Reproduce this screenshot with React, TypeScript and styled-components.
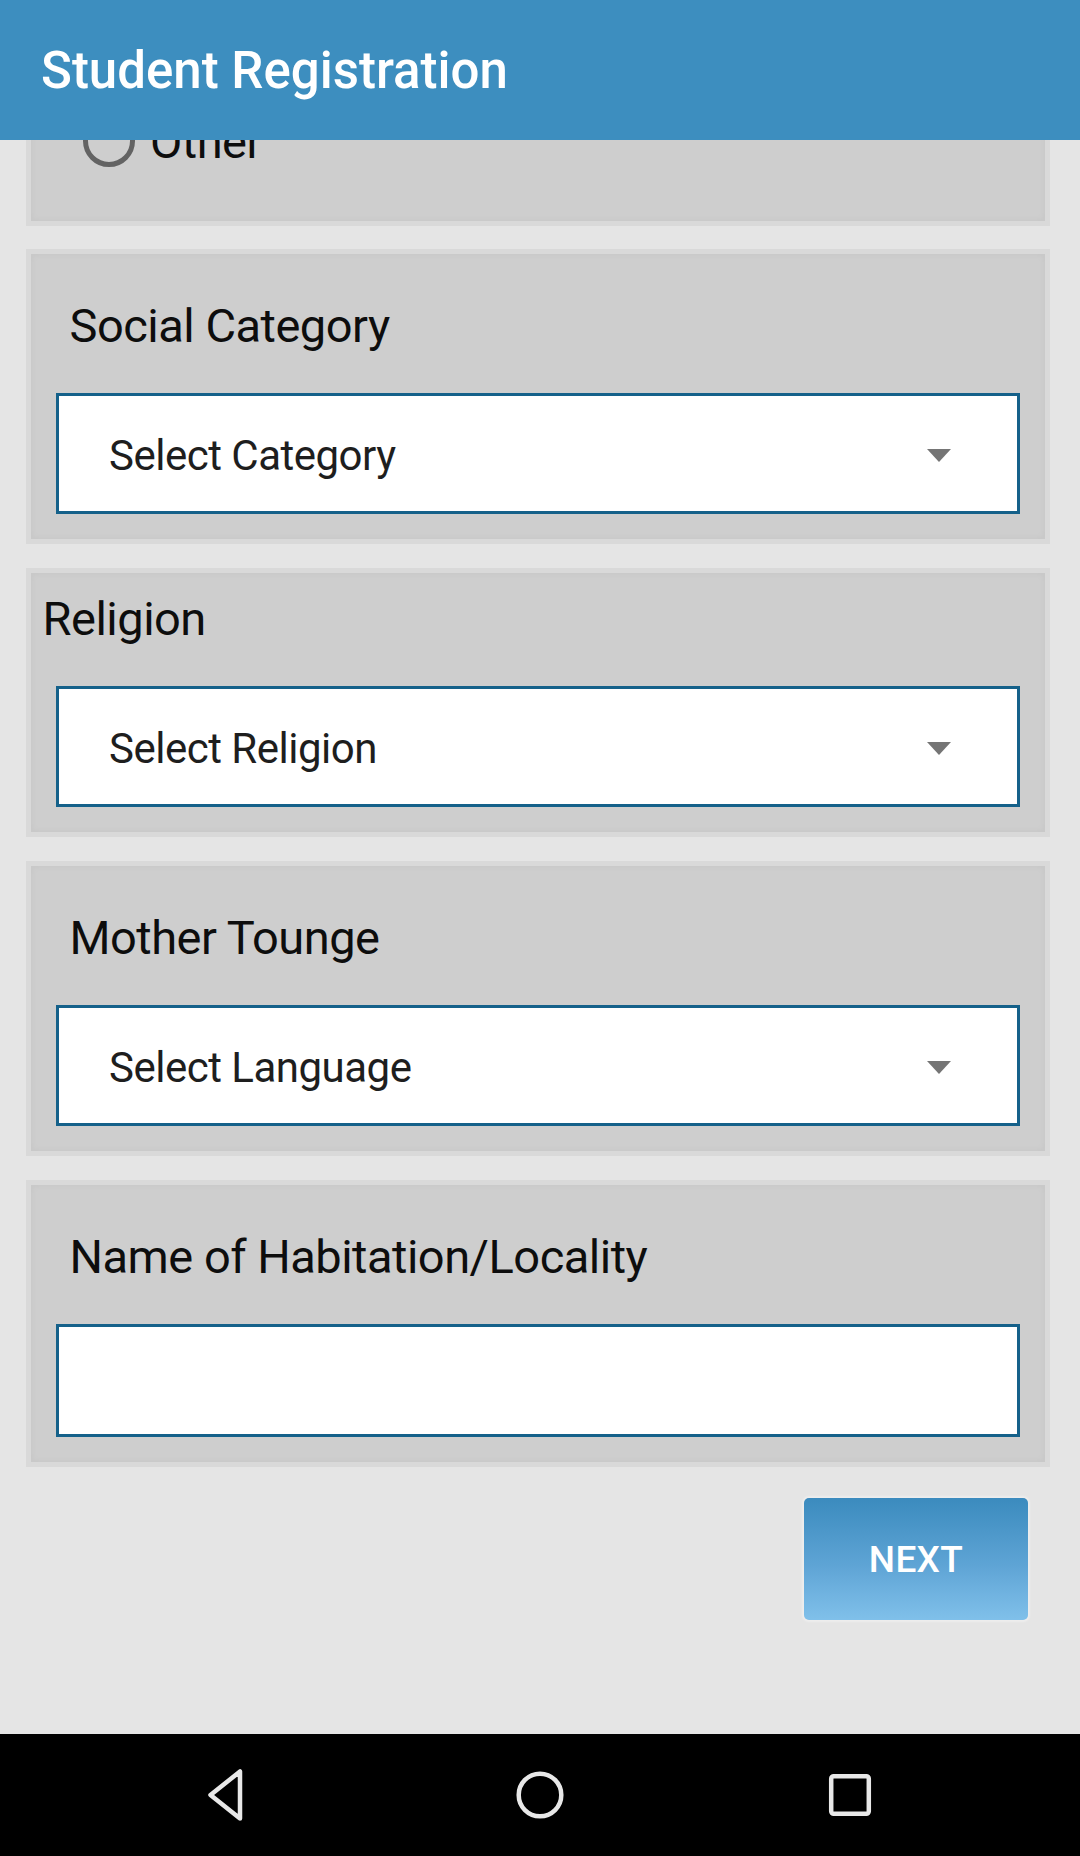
import styled, { createGlobalStyle } from "styled-components";

const GlobalStyle = createGlobalStyle`
    html, body {
        margin: 0;
        padding: 0;
        background: #e5e5e5;
    }
    body {
        font-family: Roboto, "Noto Sans", "Liberation Sans", sans-serif;
    }
    * {
        box-sizing: border-box;
    }
`;

const Screen = styled.div({
    width: 1080,
    height: 1856,
    display: 'flex',
    flexDirection: 'column',
    background: '#e5e5e5',
    overflow: 'hidden',
});

const AppBar = styled.header`
    height: 140px;
    flex-shrink: 0;
    display: flex;
    align-items: center;
    padding-left: 41px;
    background: #3d8ebf;
    position: relative;
    z-index: 1;
`;

const Title = styled.h1`
    margin: 0;
    font-size: 51px;
    font-weight: 500;
    color: #ffffff;
`;

const ScrollArea = styled.main`
    flex: 1;
    overflow: hidden;
    display: flex;
    flex-direction: column;
    gap: 24px;
    padding: 0 30px 0 26px;
`;

const Card = styled.section<{ $clipped?: boolean }>(({ $clipped }) => ({
    display: 'flex',
    flexDirection: 'column',
    background: '#cecece',
    border: '5px solid #d9d9d9',
    boxShadow: 'inset 0 0 6px 1px rgba(0, 0, 0, 0.035)',
    padding: '0 25px',
    marginTop: $clipped ? -61 : 0,
    marginBottom: $clipped ? -1 : 0,
    flexShrink: 0,
}));

const RadioRow = styled.label`
    display: flex;
    align-items: center;
    height: 56px;
    margin: 29px 0 52px 27px;
    gap: 15px;
    font-size: 47px;
    letter-spacing: -0.5px;
    color: #0d0d0d;
`;

const RadioCircle = styled.span`
    width: 52px;
    height: 52px;
    border-radius: 50%;
    border: 5px solid #636363;
    flex-shrink: 0;
`;

const FieldLabel = styled.div<{ $flush?: boolean }>(({ $flush }) => ({
    fontSize: 47,
    lineHeight: '55px',
    letterSpacing: -0.5,
    color: '#0d0d0d',
    marginTop: $flush ? 18 : 44,
    marginLeft: $flush ? -13.5 : 13.5,
    marginBottom: 40,
}));

const SelectBox = styled.div`
    height: 121px;
    display: flex;
    align-items: center;
    justify-content: space-between;
    background: #ffffff;
    border: 3px solid #15618a;
    padding: 4px 66px 0 50px;
    margin-bottom: 25px;
    font-size: 42px;
    letter-spacing: -0.5px;
    color: #1e1e1e;
`;

const Caret = styled.span`
    width: 0;
    height: 0;
    border-left: 12px solid transparent;
    border-right: 12px solid transparent;
    border-top: 13px solid #757575;
`;

const TextInput = styled.input`
    height: 113px;
    width: 100%;
    background: #ffffff;
    border: 3px solid #15618a;
    margin: 0 0 25px;
    padding: 0 49px;
    font-family: inherit;
    font-size: 42px;
    outline: none;
`;

const ButtonRow = styled.div`
    display: flex;
    justify-content: flex-end;
    padding: 7px 22px 0 0;
    flex-shrink: 0;
`;

const NextButton = styled.button`
    width: 224px;
    height: 122px;
    border: none;
    border-radius: 5px;
    background: linear-gradient(to bottom, #3b8bbe 0%, #5ea4d5 55%, #80c0ea 100%);
    box-shadow: 0 0 2px 2px rgba(255, 255, 255, 0.35);
    color: #ffffff;
    font-family: inherit;
    font-size: 37px;
    font-weight: 500;
    letter-spacing: 0.3px;
`;

const NavBar = styled.nav`
    height: 122px;
    flex-shrink: 0;
    background: #000000;
    display: flex;
    align-items: center;
    justify-content: center;
    gap: 250px;
`;

const NavIcon = styled.svg`
    width: 60px;
    height: 60px;
    display: block;
`;

type DropdownFieldProps = {
    label: string;
    placeholder: string;
    flush?: boolean;
};

const DropdownField = ({ label, placeholder, flush }: DropdownFieldProps) => (
    <Card>
        <FieldLabel $flush={flush}>{label}</FieldLabel>
        <SelectBox>
            <span>{placeholder}</span>
            <Caret />
        </SelectBox>
    </Card>
);

const App = () => {
    return <>
        <GlobalStyle />
        <Screen>
            <AppBar>
                <Title>Student Registration</Title>
            </AppBar>
            <ScrollArea>
                <Card $clipped>
                    <RadioRow>
                        <RadioCircle />
                        Other
                    </RadioRow>
                </Card>
                <DropdownField label="Social Category" placeholder="Select Category" />
                <DropdownField label="Religion" placeholder="Select Religion" flush />
                <DropdownField label="Mother Tounge" placeholder="Select Language" />
                <Card>
                    <FieldLabel>Name of Habitation/Locality</FieldLabel>
                    <TextInput type="text" />
                </Card>
                <ButtonRow>
                    <NextButton>NEXT</NextButton>
                </ButtonRow>
            </ScrollArea>
            <NavBar>
                <NavIcon viewBox="0 0 60 60">
                    <path d="M40 6.5 L40 53.5 L10.5 30 Z" fill="none" stroke="#e8e8e8" strokeWidth="4.5" strokeLinejoin="round" />
                </NavIcon>
                <NavIcon viewBox="0 0 60 60">
                    <circle cx="30" cy="30" r="21.3" fill="none" stroke="#e8e8e8" strokeWidth="4.5" />
                </NavIcon>
                <NavIcon viewBox="0 0 60 60">
                    <rect x="11.2" y="11.2" width="37.6" height="37.6" rx="2.5" fill="none" stroke="#e8e8e8" strokeWidth="4.5" />
                </NavIcon>
            </NavBar>
        </Screen>
    </>
};

export default App;
